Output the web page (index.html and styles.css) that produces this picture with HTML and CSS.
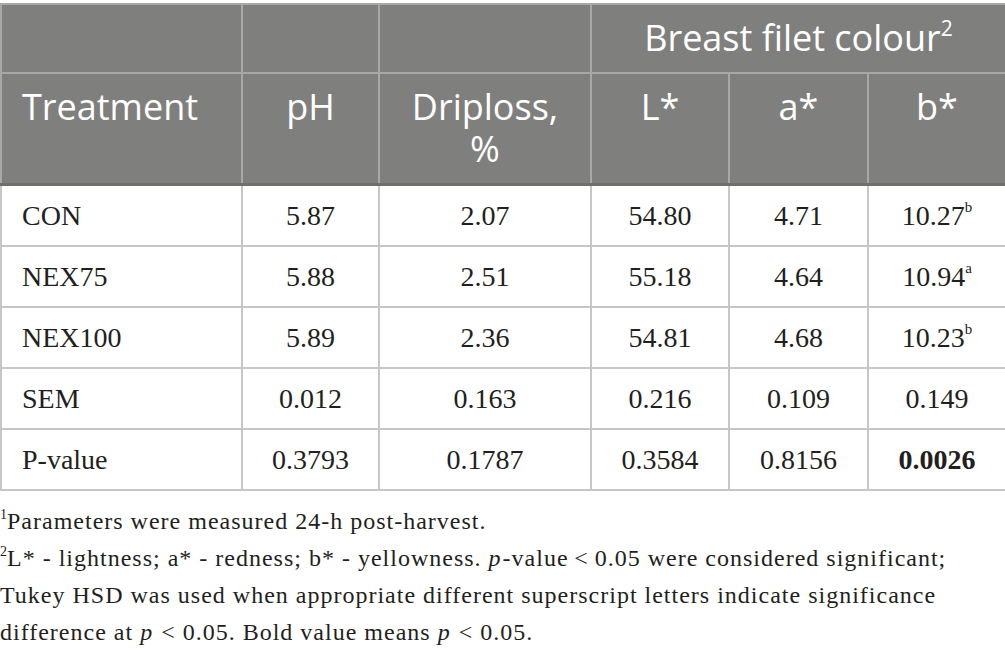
FILE: index.html
```html
<!DOCTYPE html>
<html lang="en">
<head>
    <meta charset="UTF-8">
    <meta name="viewport" content="width=device-width, initial-scale=1.0">
    <title>Breast filet quality</title>
    <link rel="stylesheet" href="styles.css">
</head>
<body>
    <table class="data-table">
        <colgroup>
            <col class="col-treat">
            <col class="col-ph">
            <col class="col-drip">
            <col class="col-l">
            <col class="col-a">
            <col class="col-b">
        </colgroup>
        <thead>
            <tr class="head-top">
                <th></th>
                <th></th>
                <th></th>
                <th colspan="3">Breast filet colour<sup>2</sup></th>
            </tr>
            <tr class="head-main">
                <th class="first">Treatment</th>
                <th>pH</th>
                <th>Driploss,<br>%</th>
                <th>L*</th>
                <th>a*</th>
                <th>b*</th>
            </tr>
        </thead>
        <tbody>
            <tr>
                <td class="first">CON</td>
                <td>5.87</td>
                <td>2.07</td>
                <td>54.80</td>
                <td>4.71</td>
                <td>10.27<sup>b</sup></td>
            </tr>
            <tr>
                <td class="first">NEX75</td>
                <td>5.88</td>
                <td>2.51</td>
                <td>55.18</td>
                <td>4.64</td>
                <td>10.94<sup>a</sup></td>
            </tr>
            <tr>
                <td class="first">NEX100</td>
                <td>5.89</td>
                <td>2.36</td>
                <td>54.81</td>
                <td>4.68</td>
                <td>10.23<sup>b</sup></td>
            </tr>
            <tr>
                <td class="first">SEM</td>
                <td>0.012</td>
                <td>0.163</td>
                <td>0.216</td>
                <td>0.109</td>
                <td>0.149</td>
            </tr>
            <tr>
                <td class="first">P-value</td>
                <td>0.3793</td>
                <td>0.1787</td>
                <td>0.3584</td>
                <td>0.8156</td>
                <td><strong>0.0026</strong></td>
            </tr>
        </tbody>
    </table>

    <div class="notes">
        <p><sup>1</sup>Parameters were measured 24-h post-harvest.</p>
        <p><sup>2</sup>L* - lightness; a* - redness; b* - yellowness. <i>p</i>-value&thinsp;&lt;&thinsp;0.05 were considered significant; Tukey HSD was used when appropriate different superscript letters indicate significance difference at <i>p</i> &lt; 0.05. Bold value means <i>p</i> &lt; 0.05.</p>
    </div>
</body>
</html>
```

FILE: styles.css
```css
body {
    margin: 0;
    padding: 3px 0 0;
    background: #fff;
    color: #231f20;
    font-family: "Liberation Serif", "Times New Roman", serif;
}
.data-table {
    width: 1005px;
    table-layout: fixed;
    border-collapse: collapse;
    border: 2px solid #c6c6c6;
}
.col-treat { width: 241px; }
.col-ph { width: 137px; }
.col-drip { width: 212px; }
.col-l { width: 138px; }
.col-a { width: 139px; }
.col-b { width: 138px; }

thead th {
    background-color: #7f807e;
    color: #fff;
    font-family: "Open Sans", sans-serif;
    font-weight: 400;
    font-size: 36px;
    line-height: 42px;
    padding: 12px 8px 13px;
    text-align: center;
    vertical-align: top;
    border: 2px solid #a8a9a7;
}
thead th sup {
    font-size: 21px;
    line-height: 0;
    vertical-align: 15px;
}
.head-main th {
    border-bottom: 3px solid #6f706e;
}
thead th.first {
    text-align: left;
    padding-left: 20px;
}
tbody td {
    height: 59px;
    padding: 0 8px;
    font-size: 28px;
    text-align: center;
    vertical-align: middle;
    border: 2px solid #c6c6c6;
}
tbody td.first {
    text-align: left;
    padding-left: 20px;
}
tbody td sup {
    font-size: 15px;
    line-height: 0;
    vertical-align: 13px;
}
.notes {
    max-width: 965px;
    padding-top: 12px;
    font-size: 24px;
    letter-spacing: 1px;
    line-height: 37px;
}
.notes p {
    margin: 0;
}
.notes i {
    padding-right: 1px;
}
.notes sup {
    font-size: 14px;
    line-height: 0;
    vertical-align: 10px;
    letter-spacing: 0;
}
```
